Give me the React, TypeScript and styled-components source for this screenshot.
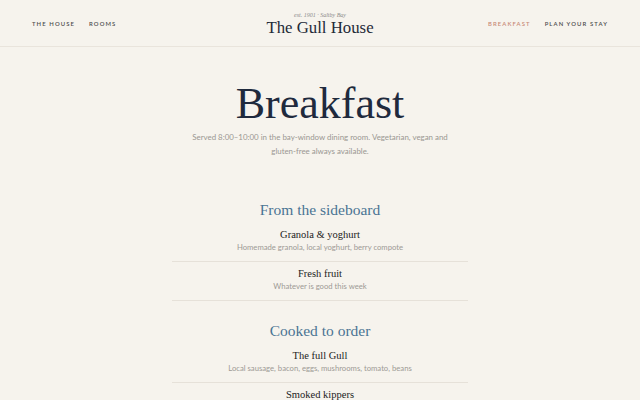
import React from "react";
import styled, { createGlobalStyle } from "styled-components";

const GlobalStyle = createGlobalStyle`
  * { box-sizing: border-box; }
  body {
    margin: 0;
    background: #f6f3ed;
    font-family: Lato, "Noto Sans", sans-serif;
    color: #333;
  }
`;

const serif = `"Liberation Serif", "DejaVu Serif", serif`;

interface Dish {
  name: string;
  note: string;
}

interface Course {
  title: string;
  dishes: Dish[];
}

const courses: Course[] = [
  {
    title: "From the sideboard",
    dishes: [
      { name: "Granola & yoghurt", note: "Homemade granola, local yoghurt, berry compote" },
      { name: "Fresh fruit", note: "Whatever is good this week" },
    ],
  },
  {
    title: "Cooked to order",
    dishes: [
      { name: "The full Gull", note: "Local sausage, bacon, eggs, mushrooms, tomato, beans" },
      { name: "Smoked kippers", note: "With brown bread and butter" },
    ],
  },
];

const Header = styled.header`
  height: 47px;
  padding: 0 32px;
  display: grid;
  grid-template-columns: 1fr auto 1fr;
  align-items: center;
  border-bottom: 1px solid #e9e4dc;
`;

const Nav = styled.nav<{ $end?: boolean }>`
  display: flex;
  gap: 14px;
  justify-content: ${(p) => (p.$end ? "flex-end" : "flex-start")};
`;

const NavLink = styled.a<{ $active?: boolean }>`
  font-size: 5.9px;
  letter-spacing: 1.1px;
  text-transform: uppercase;
  color: ${(p) => (p.$active ? "#c98b78" : "#4d4d4d")};
  text-decoration: none;
  font-weight: 600;
`;

const Brand = styled.div`
  display: flex;
  flex-direction: column;
  align-items: center;
  margin-top: 3px;
`;

const Est = styled.span`
  font-family: ${serif};
  font-style: italic;
  font-size: 6px;
  color: #8a8a8a;
  line-height: 1;
`;

const BrandName = styled.span`
  font-family: ${serif};
  font-size: 16.8px;
  color: #1f2a38;
  line-height: 1.15;
`;

const Main = styled.main`
  display: flex;
  flex-direction: column;
  align-items: center;
  padding-top: 33px;
`;

const Title = styled.h1`
  margin: 0;
  font-family: ${serif};
  font-weight: 400;
  font-size: 44px;
  line-height: 48px;
  color: #1f2a3d;
`;

const Lede = styled.p`
  margin: 2px 0 0;
  max-width: 262px;
  text-align: center;
  font-size: 7.9px;
  line-height: 14px;
  color: #9a9792;
`;

const Section = styled.section`
  width: 296px;
  display: flex;
  flex-direction: column;
  align-items: center;
  margin-top: 42px;
  & + & {
    margin-top: 20px;
  }
`;

const SectionTitle = styled.h2`
  margin: 0 0 3px;
  font-family: ${serif};
  font-weight: 400;
  font-size: 15.5px;
  line-height: 20px;
  color: #4a7393;
`;

const Item = styled.div`
  width: 100%;
  text-align: center;
  padding: 6px 0 8px;
  border-bottom: 1px solid #e6e1d9;
`;

const ItemName = styled.div`
  font-family: ${serif};
  font-size: 10.5px;
  line-height: 12px;
  color: #222;
`;

const ItemNote = styled.div`
  font-size: 7.7px;
  line-height: 12px;
  color: #9d9a95;
`;

export default function App() {
  return (
    <>
      <GlobalStyle />
      <Header>
        <Nav>
          <NavLink>The House</NavLink>
          <NavLink>Rooms</NavLink>
        </Nav>
        <Brand>
          <Est>est. 1901 · Saltby Bay</Est>
          <BrandName>The Gull House</BrandName>
        </Brand>
        <Nav $end>
          <NavLink $active>Breakfast</NavLink>
          <NavLink>Plan your stay</NavLink>
        </Nav>
      </Header>
      <Main>
        <Title>Breakfast</Title>
        <Lede>
          Served 8:00–10:00 in the bay-window dining room. Vegetarian, vegan and
          gluten-free always available.
        </Lede>
        {courses.map((course) => (
          <Section key={course.title}>
            <SectionTitle>{course.title}</SectionTitle>
            {course.dishes.map((dish) => (
              <Item key={dish.name}>
                <ItemName>{dish.name}</ItemName>
                <ItemNote>{dish.note}</ItemNote>
              </Item>
            ))}
          </Section>
        ))}
      </Main>
    </>
  );
}
